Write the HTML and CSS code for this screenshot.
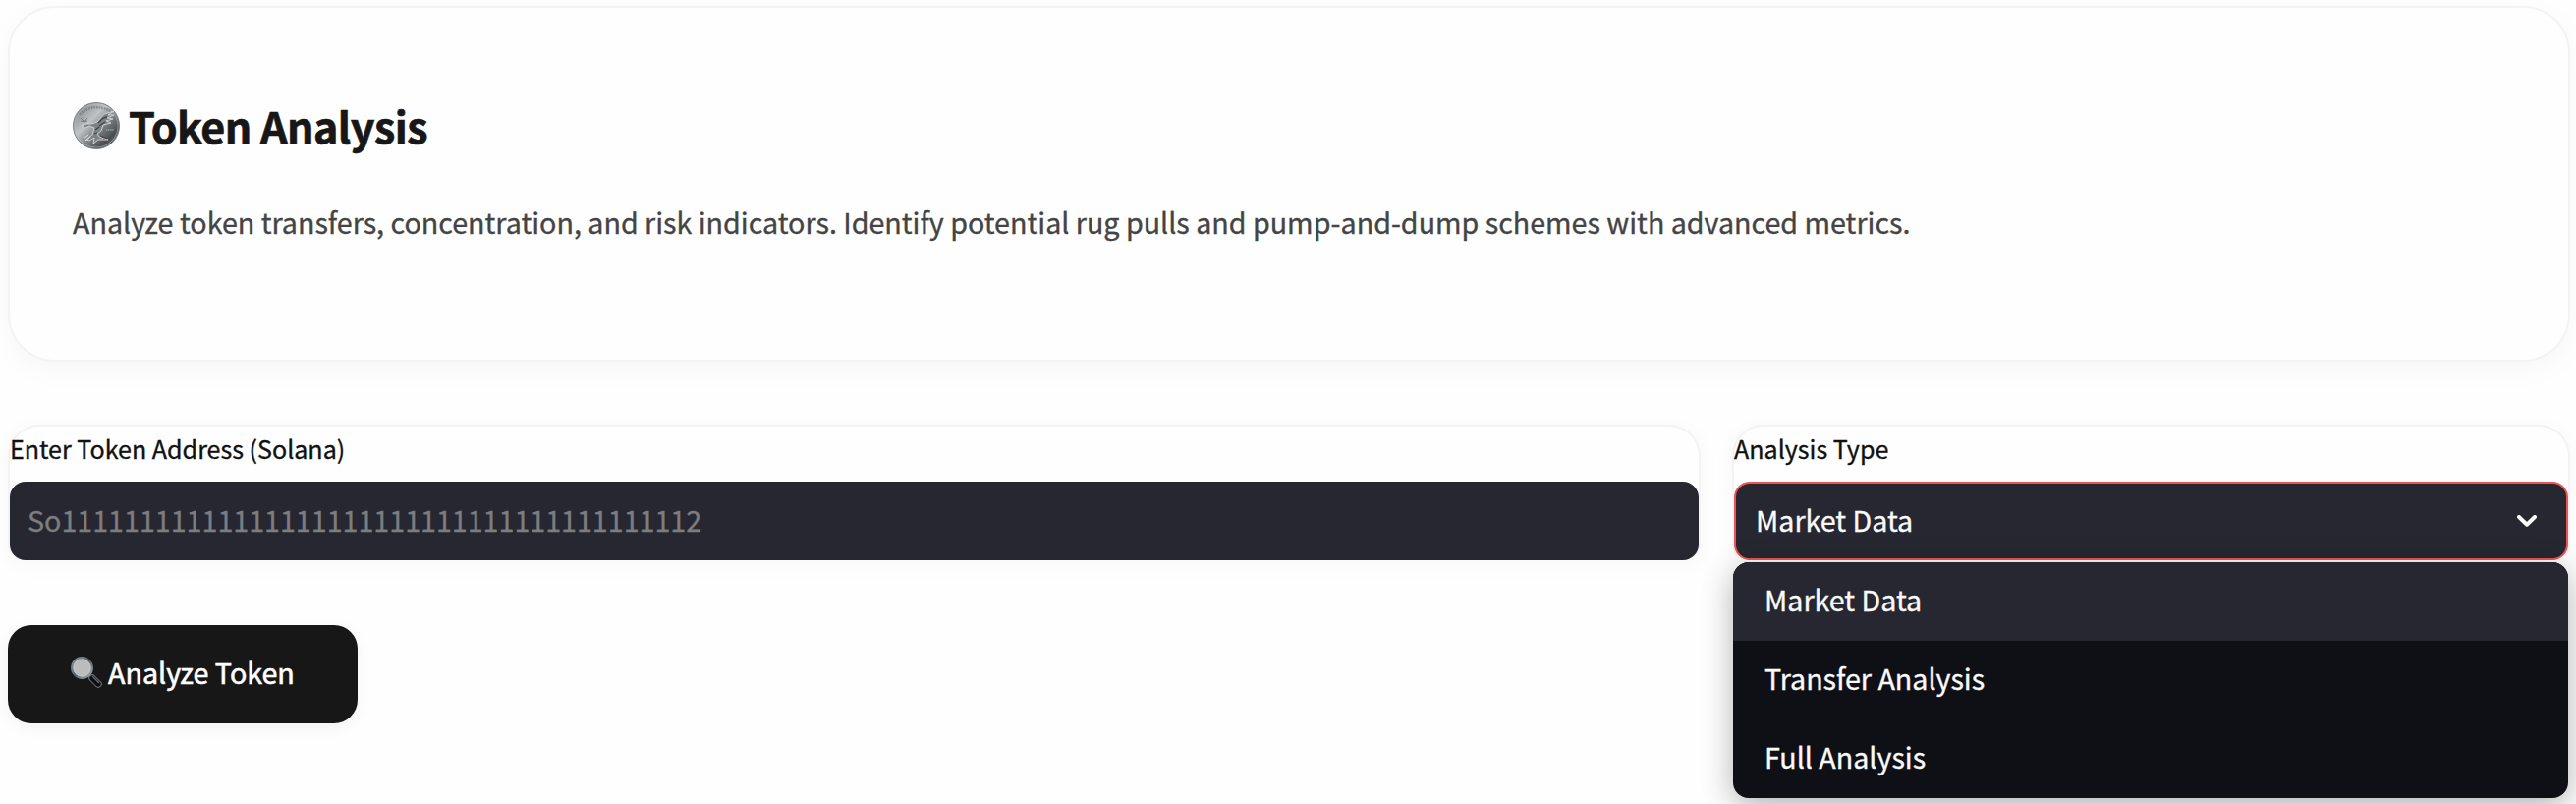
FILE: index.html
```html
<!DOCTYPE html>
<html lang="en">
<head>
<meta charset="utf-8">
<title>Token Analysis</title>
<link rel="stylesheet" href="styles.css">
</head>
<body>
<main class="page">
  <section class="card">
    <h2 class="card-title">
      <svg class="coin" viewBox="0 0 48 48" aria-hidden="true">
        <defs>
          <linearGradient id="coinFace" x1="0.1" y1="0.1" x2="0.9" y2="0.9">
            <stop offset="0" stop-color="#85898b"/>
            <stop offset="0.35" stop-color="#bfc3c5"/>
            <stop offset="0.6" stop-color="#7c8183"/>
            <stop offset="0.85" stop-color="#484c4e"/>
            <stop offset="1" stop-color="#6c7173"/>
          </linearGradient>
        </defs>
        <circle cx="24" cy="24" r="23.5" fill="url(#coinFace)" stroke="#7d8284"/>
        <circle cx="24" cy="24" r="22" fill="none" stroke="#c3c7c8" stroke-width="0.9" opacity="0.6"/>
        <path d="M7 12.500Q20 0 39 9" fill="none" stroke="#74797b" stroke-width="2.400" stroke-dasharray="1.600 1.100" opacity="0.8"/>
        <path d="M25 20L32 12L42 9L36 13L42 13L35 16L41 17L34 19L39 21L31 23L29 29L25 32L27 35L36 38L26 38L21 42L22 36L17 39L14 38L20 33L22 26L17 24L13 26L9 24L14 22L19 22Z" fill="#7d8284" stroke="#d5d8d8" stroke-width="0.9" stroke-linejoin="round"/>
        <path d="M26 21L31 16L35 15M27 24L33 20M23 28L27 25M22 32L25 31M28 34L35 37" fill="none" stroke="#3f4446" stroke-width="1.300"/>
        <path d="M8 16L12 20M11 15L12 20M15 16L12 20M8 19L12 20L15 19" fill="none" stroke="#737a7c" stroke-width="1"/>
        <path d="M11 37L16 33M13 39L18 35" stroke="#e4e7e7" stroke-width="1"/>
        <path d="M34 28h8" stroke="#8c9193" stroke-width="2" stroke-dasharray="1.400 0.700"/>
        <path d="M31 37h2" stroke="#a85858" stroke-width="1"/>
      </svg>
      <span class="card-title-text">Token Analysis</span>
    </h2>
    <p class="card-text">Analyze token transfers, concentration, and risk indicators. Identify potential rug pulls and pump-and-dump schemes with advanced metrics.</p>
  </section>

  <div class="fields">
    <div class="field">
      <label class="label" for="address">Enter Token Address (Solana)</label>
      <input class="input" id="address" type="text" placeholder="So11111111111111111111111111111111111111112">
    </div>
    <div class="field">
      <span class="label">Analysis Type</span>
      <div class="select">
        <span>Market Data</span>
        <svg class="chevron" viewBox="0 0 20 12" aria-hidden="true"><path d="M2 2L10 9.700L18 2" fill="none" stroke="#fafafa" stroke-width="4" stroke-linecap="round" stroke-linejoin="round"/></svg>
      </div>
      <ul class="menu">
        <li class="option option-active">Market Data</li>
        <li class="option">Transfer Analysis</li>
        <li class="option">Full Analysis</li>
      </ul>
    </div>
  </div>

  <button class="button" type="button">
    <svg class="glass" viewBox="0 0 32 32" aria-hidden="true">
      <defs>
        <linearGradient id="rim" x1="0" y1="0" x2="1" y2="1">
          <stop offset="0" stop-color="#8f9aa6"/>
          <stop offset="0.5" stop-color="#59626d"/>
          <stop offset="1" stop-color="#a3abb3"/>
        </linearGradient>
      </defs>
      <path d="M18.500 18.500L21 21" stroke="#89929a" stroke-width="3"/>
      <path d="M22 22L28 28" stroke="#74797e" stroke-width="7.400" stroke-linecap="round"/>
      <path d="M22 22L28 28" stroke="#0b0d10" stroke-width="5.400" stroke-linecap="round"/>
      <path d="M22.500 20.500L28.500 26.500" stroke="#5d6873" stroke-width="1.500" stroke-linecap="round"/>
      <circle cx="11.500" cy="11.500" r="10.200" fill="#bcbcbc" stroke="url(#rim)" stroke-width="2.500"/>
      <circle cx="11.500" cy="11.500" r="8.700" fill="none" stroke="#d3d6d8" stroke-width="0.700"/>
    </svg>
    <span class="button-text">Analyze Token</span>
  </button>
</main>
</body>
</html>
```
FILE: styles.css
```css
* {
  box-sizing: border-box;
}

body {
  margin: 0;
  height: 818px;
  overflow: hidden;
  background: #fefefe;
  font-family: "Noto Sans CJK SC", "Noto Sans", sans-serif;
  font-size: 28.65px;
  -webkit-text-stroke: 0.35px currentColor;
}

.page {
  padding: 6px 6px 0 8px;
}

.card {
  height: 362px;
  padding: 86px 64px 0;
  border: 2px solid #f3f3f3;
  border-radius: 48px;
  background: #fefefe;
  box-shadow: 0 8px 32px rgba(0, 0, 0, 0.03);
}

.card-title {
  display: flex;
  align-items: center;
  gap: 9px;
  height: 68px;
  margin: 0;
  color: #171717;
  font-size: 43px;
  font-weight: 700;
  letter-spacing: -0.55px;
  line-height: 68px;
  -webkit-text-stroke-width: 0.7px;
}

.coin {
  width: 48px;
  height: 48px;
}

.card-title-text {
  padding-bottom: 2px;
}

.card-text {
  margin: 38px 0 0;
  color: #444;
  letter-spacing: 0.006px;
  line-height: 52px;
  white-space: nowrap;
}

.fields {
  display: grid;
  grid-template-columns: 1723px 853px;
  gap: 32px;
  margin-top: 64px;
}

.field {
  position: relative;
  height: 138px;
  border: 2px solid #f3f3f3;
  border-bottom: 0;
  border-radius: 32px 32px 16px 16px;
  background: #fefefe;
  box-shadow: 0 4px 24px rgba(0, 0, 0, 0.03);
}

.label {
  display: block;
  height: 56px;
  color: #111;
  font-size: 25.07px;
  line-height: 45px;
  white-space: nowrap;
}

.input,
.select {
  width: 100%;
  height: 80px;
  border: 2px solid #262730;
  border-radius: 16px;
  background: #262730;
  color: #fafafa;
  font: inherit;
}

.input {
  display: block;
  padding: 0 16px 3px;
}

.input::placeholder {
  color: #7d7d81;
  opacity: 1;
}

.select {
  display: flex;
  align-items: center;
  justify-content: space-between;
  padding: 0 30px 4px 20px;
  border-color: #ee5351;
}

.chevron {
  width: 20px;
  height: 12px;
  margin-bottom: -4px;
}

.menu {
  position: absolute;
  top: 138px;
  left: -1px;
  width: 850px;
  margin: 0;
  padding: 0;
  overflow: hidden;
  border-radius: 16px;
  background: #0f1016;
  box-shadow: 0 8px 32px rgba(0, 0, 0, 0.3);
  list-style: none;
}

.option {
  display: flex;
  align-items: center;
  height: 80px;
  padding: 0 32px 5px;
  color: #fafafa;
}

.option-active {
  background: #262730;
}

.button {
  display: flex;
  align-items: center;
  gap: 6px;
  width: 356px;
  height: 100px;
  margin-top: 66px;
  padding: 0 0 5px 64px;
  border: 0;
  border-radius: 24px;
  background: #171717;
  box-shadow: 0 4px 16px rgba(0, 0, 0, 0.05);
  color: #fff;
  font: inherit;
  -webkit-text-stroke-width: 0.6px;
}

.glass {
  width: 32px;
  height: 32px;
}

.button-text {
  white-space: nowrap;
}
```
